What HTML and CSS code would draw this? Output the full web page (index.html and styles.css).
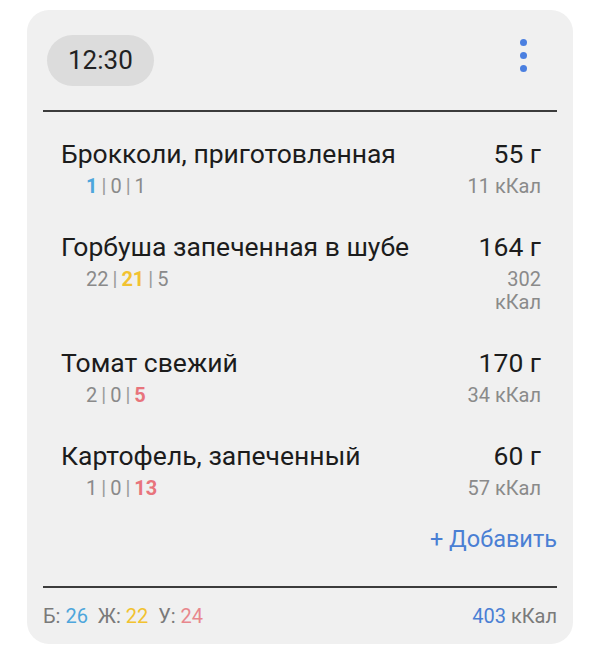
FILE: index.html
```html
<!DOCTYPE html>
<html lang="ru">
<head>
  <meta charset="UTF-8" />
  <title>Приём пищи</title>
  <link rel="stylesheet" href="styles.css">
</head>
<body>
  <div class="meal">
    <div class="meal-head">
      <div class="time">12:30</div>
      <div class="menu" title="Меню">
        <span></span><span></span><span></span>
      </div>
    </div>

    <div class="line"></div>

    <div class="item">
      <div class="item-left">
        <div class="name">Брокколи, приготовленная</div>
        <div class="macros"><b class="prot">1</b><i>|</i>0<i>|</i>1</div>
      </div>
      <div class="item-right">
        <div class="weight">55 г</div>
        <div class="kcal">11 кКал</div>
      </div>
    </div>

    <div class="item">
      <div class="item-left">
        <div class="name">Горбуша запеченная в шубе</div>
        <div class="macros">22<i>|</i><b class="fat">21</b><i>|</i>5</div>
      </div>
      <div class="item-right">
        <div class="weight">164 г</div>
        <div class="kcal">302 кКал</div>
      </div>
    </div>

    <div class="item">
      <div class="item-left">
        <div class="name">Томат свежий</div>
        <div class="macros">2<i>|</i>0<i>|</i><b class="carb">5</b></div>
      </div>
      <div class="item-right">
        <div class="weight">170 г</div>
        <div class="kcal">34 кКал</div>
      </div>
    </div>

    <div class="item">
      <div class="item-left">
        <div class="name">Картофель, запеченный</div>
        <div class="macros">1<i>|</i>0<i>|</i><b class="carb">13</b></div>
      </div>
      <div class="item-right">
        <div class="weight">60 г</div>
        <div class="kcal">57 кКал</div>
      </div>
    </div>

    <div class="add-row">
      <button class="add">+ Добавить</button>
    </div>

    <div class="line"></div>

    <div class="totals">
      <div>Б: <span class="prot">26</span>&nbsp; Ж: <span class="fat">22</span>&nbsp; У: <span class="carb">24</span></div>
      <div><span class="sum">403</span> кКал</div>
    </div>
  </div>
</body>
</html>
```

FILE: styles.css
```css
body {
  margin: 0;
  background: #fff;
  font-family: Roboto, "Noto Sans", sans-serif;
  color: #1c1c1c;
  padding: 10px 27px;
}
.meal {
  background: #f0f0f0;
  border-radius: 22px;
  padding: 25px 16px 17px;
}
.meal-head {
  display: flex;
  justify-content: space-between;
  align-items: flex-start;
  padding-left: 4px;
}
.time {
  background: #dcdcdc;
  border-radius: 26px;
  height: 51px;
  line-height: 51px;
  padding: 0 21px;
  font-size: 26px;
  color: #222;
}
.menu {
  display: flex;
  flex-direction: column;
  gap: 6px;
  margin: 4px 30px 0 0;
}
.menu span {
  width: 7px;
  height: 7px;
  border-radius: 50%;
  background: #4a7fe0;
}
.line {
  height: 2px;
  background: #3c3c3c;
}
.meal-head + .line {
  margin-top: 24px;
}
.item {
  display: flex;
  justify-content: space-between;
  padding: 0 16px 0 18px;
  margin-top: 26px;
}
.item + .item {
  margin-top: 33px;
}
.name, .weight {
  font-size: 26.5px;
  line-height: 31px;
}
.macros, .kcal {
  font-size: 20px;
  line-height: 23px;
  color: #8a8a8a;
  margin-top: 6px;
}
.macros {
  padding-left: 25px;
}
.macros i {
  font-style: normal;
  color: #9a9a9a;
  margin: 0 4px;
}
.macros b {
  font-weight: bold;
}
.item-right {
  text-align: right;
}
.kcal {
  max-width: 80px;
  margin-left: auto;
}
.prot { color: #4ea6dc; }
.fat { color: #f2c230; }
.carb { color: #e8747c; }
.add-row {
  display: flex;
  justify-content: flex-end;
  margin: 26px 0 33px;
}
.add {
  border: none;
  background: none;
  padding: 0;
  font-family: inherit;
  font-size: 23.5px;
  line-height: 27px;
  color: #4a7fd4;
  cursor: pointer;
}
.totals {
  display: flex;
  justify-content: space-between;
  margin-top: 17px;
  font-size: 20px;
  line-height: 22px;
  color: #7a7a7a;
}
.totals .sum { color: #4a7fd4; }
.totals .carb { color: #e8878d; }
```
